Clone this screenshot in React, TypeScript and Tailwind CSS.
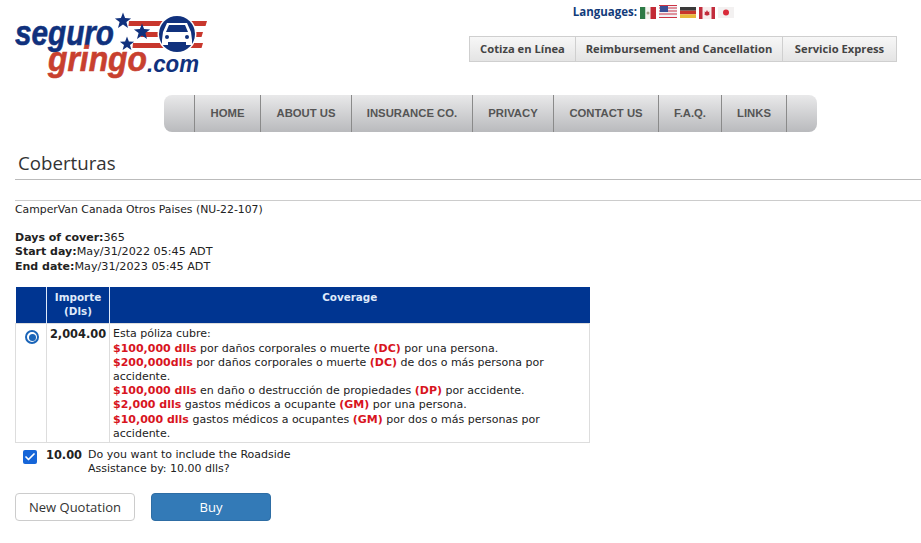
import React from 'react';
import { Check } from 'lucide-react';

const navItems = [
  { label: '', width: 'w-[30px] rounded-l-lg' },
  { label: 'HOME', width: 'w-[66px]' },
  { label: 'ABOUT US', width: 'w-[91px]' },
  { label: 'INSURANCE CO.', width: 'w-[121px]' },
  { label: 'PRIVACY', width: 'w-[81px]' },
  { label: 'CONTACT US', width: 'w-[105px]' },
  { label: 'F.A.Q.', width: 'w-[63px]' },
  { label: 'LINKS', width: 'w-[65px]' },
  { label: '', width: 'w-[31px] rounded-r-lg' },
];

const starPoints = (cx: number, cy: number, r: number) =>
  Array.from({ length: 10 }, (_, i) => {
    const radius = i % 2 === 0 ? r : r * 0.42;
    const angle = (Math.PI / 5) * i - Math.PI / 2;
    return `${(cx + radius * Math.cos(angle)).toFixed(1)},${(cy + radius * Math.sin(angle)).toFixed(1)}`;
  }).join(' ');

const Logo = () => (
  <svg width="195" height="70" viewBox="0 0 195 70" className="block">
    <path d="M114 9h78l-1.500 5h-77zM126 20h62l-1.500 5h-61zM118 31h70l-1.500 5h-69z" fill="#c8372d" />
    <circle cx="162" cy="22" r="19.500" fill="#fff" />
    <circle cx="162" cy="22" r="18" fill="#10317d" />
    <path d="M152 11h20l4 9 1 8v5h-6v-3h-18v3h-6v-5l1-8z" fill="#fff" />
    <path d="M154 13h16l3 7h-22z" fill="#10317d" />
    <circle cx="152" cy="25" r="2" fill="#10317d" />
    <circle cx="172" cy="25" r="2" fill="#10317d" />
    <polygon points={starPoints(108, 9, 8.500)} fill="#10317d" />
    <polygon points={starPoints(127, 20, 8.500)} fill="#10317d" />
    <polygon points={starPoints(112, 32, 7.500)} fill="#10317d" />
    <text x="0" y="33" textLength="99" lengthAdjust="spacingAndGlyphs" fill="#10317d" stroke="#10317d" strokeWidth="0.6" fontFamily="'Liberation Sans', sans-serif" fontSize="35" fontWeight="700" fontStyle="italic">seguro</text>
    <text x="33" y="59" textLength="99" lengthAdjust="spacingAndGlyphs" fill="#c8402f" stroke="#c8402f" strokeWidth="0.6" fontFamily="'Liberation Sans', sans-serif" fontSize="35" fontWeight="700" fontStyle="italic">gringo</text>
    <text x="132" y="60" textLength="52" lengthAdjust="spacingAndGlyphs" fill="#10317d" fontFamily="'Liberation Sans', sans-serif" fontSize="23" fontWeight="700" fontStyle="italic">.com</text>
  </svg>
);

const Flags = () => (
  <div className="flex items-center gap-[3px] ml-[3px]">
    <svg width="16" height="12" viewBox="0 0 16 12">
      <rect width="5.500" height="12" fill="#2d7a45" />
      <rect x="5.500" width="5" height="12" fill="#f4f4f0" />
      <rect x="10.500" width="5.500" height="12" fill="#c32a35" />
      <circle cx="8" cy="6" r="1.500" fill="#a9a38a" />
    </svg>
    <svg width="18" height="13" viewBox="0 0 18 13" className="-mt-[2px]">
      <rect width="18" height="13" fill="#f2f2f6" />
      <path d="M0 .5h18M0 3h18M0 6h18M0 9h18M0 12.500h18" stroke="#cc3344" strokeWidth="1.200" />
      <rect x="1" y="1" width="8" height="6" fill="#3a4f96" />
    </svg>
    <svg width="16" height="11" viewBox="0 0 16 11">
      <rect width="16" height="3.700" fill="#3a3a3a" />
      <rect y="3.700" width="16" height="3.600" fill="#c8352b" />
      <rect y="7.300" width="16" height="3.700" fill="#e8b83a" />
    </svg>
    <svg width="16" height="12" viewBox="0 0 16 12">
      <rect width="16" height="12" fill="#f7eeee" />
      <rect width="3.500" height="12" fill="#c22c3c" />
      <rect x="12.500" width="3.500" height="12" fill="#c22c3c" />
      <path d="M8 3l1 2 1.500-.5-.5 2 1 .5-2 1.500H7L5 7l1-.5-.5-2L7 5z" fill="#c22c3c" />
    </svg>
    <svg width="16" height="11" viewBox="0 0 16 11">
      <rect width="16" height="11" fill="#f3f1f1" />
      <circle cx="8" cy="5.500" r="3" fill="#d92b3a" />
    </svg>
  </div>
);

export default function App() {
  return (
    <div className="min-h-screen bg-white overflow-hidden text-[#222] [font-family:'DejaVu_Sans',sans-serif] text-[10.85px] leading-[14.2px]">
      {/* Header */}
      <header className="flex justify-between h-[95px]">
        <div className="pl-[15px] pt-[12px]">
          <Logo />
        </div>
        <div className="flex flex-col items-end pr-[24px]">
          <div className="flex items-center h-[24px] pr-[163px] pt-[1px]">
            <span className="[font-family:'Open_Sans',sans-serif] text-[11.500px] font-bold text-[#123b7a]">Languages:</span>
            <Flags />
          </div>
          <div className="flex h-[26px] mt-[12px] border border-[#cfcfcf] bg-gradient-to-b from-[#f7f7f7] to-[#e4e4e4] [font-family:'Open_Sans',sans-serif] text-[11.200px] font-bold text-[#444]">
            <div className="w-[105px] flex items-center justify-center">Cotiza en Línea</div>
            <div className="w-[208px] flex items-center justify-center border-x border-[#cfcfcf]">Reimbursement and Cancellation</div>
            <div className="w-[113px] flex items-center justify-center">Servicio Express</div>
          </div>
        </div>
      </header>

      {/* Main nav */}
      <nav className="flex ml-[164px] w-[653px] h-[37px] [font-family:'Liberation_Sans',sans-serif] text-[11.300px] font-bold text-[#555]">
        {navItems.map((item, index) => (
          <div
            key={index}
            className={`${item.width} flex items-center justify-center bg-gradient-to-b from-[#e9e9ea] to-[#b9babd] border-l border-[#8a8a8a] first:border-l-0`}
          >
            {item.label}
          </div>
        ))}
      </nav>

      {/* Content */}
      <main className="pl-[15px] pt-[18px]">
        <h1 className="pl-[3px] h-[29px] [font-family:'Open_Sans',sans-serif] text-[18.700px] leading-[25px] font-normal text-[#333] border-b border-[#bbb] box-content">
          Coberturas
        </h1>
        <div className="mt-[20px] border-t border-[#ccc] pt-[2px]">CamperVan Canada Otros Paises (NU-22-107)</div>

        <div className="mt-[14px] text-[11px]">
          <div><b>Days of cover:</b><span className="text-[11.200px]">365</span></div>
          <div><b>Start day:</b><span className="text-[11.200px]">May/31/2022 05:45 ADT</span></div>
          <div><b>End date:</b><span className="text-[11.200px]">May/31/2023 05:45 ADT</span></div>
        </div>

        <table className="mt-[13px] w-[575px] border-collapse table-fixed">
          <thead>
            <tr className="h-[37px] bg-[#003591] text-[#dfe9fa] font-bold text-[10.400px] text-center align-top">
              <th className="w-[31px]"></th>
              <th className="w-[63px] pt-[3px] border-x border-[#dfe9fa]">Importe (Dls)</th>
              <th className="pt-[3px]">Coverage</th>
            </tr>
          </thead>
          <tbody>
            <tr className="align-top text-[11px]">
              <td className="border border-[#ddd] pt-[6px]">
                <div className="ml-[9px] w-[14px] h-[14px] rounded-full border-[2px] border-[#1a64b8] flex items-center justify-center">
                  <div className="w-[7px] h-[7px] rounded-full bg-[#1a64b8]" />
                </div>
              </td>
              <td className="border border-[#ddd] pt-[3px] text-center font-bold text-[11.400px] whitespace-nowrap">2,004.00</td>
              <td className="border border-[#ddd] pl-[3px] pt-[3px] pb-[1px] pr-[20px]">
                Esta póliza cubre:<br />
                <b className="text-[#d8141e]">$100,000 dlls</b> por daños corporales o muerte <b className="text-[#d8141e]">(DC)</b> por una persona.<br />
                <b className="text-[#d8141e]">$200,000dlls</b> por daños corporales o muerte <b className="text-[#d8141e]">(DC)</b> de dos o más persona por<br />
                accidente.<br />
                <b className="text-[#d8141e]">$100,000 dlls</b> en daño o destrucción de propiedades <b className="text-[#d8141e]">(DP)</b> por accidente.<br />
                <b className="text-[#d8141e]">$2,000 dlls</b> gastos médicos a ocupante <b className="text-[#d8141e]">(GM)</b> por una persona.<br />
                <b className="text-[#d8141e]">$10,000 dlls</b> gastos médicos a ocupantes <b className="text-[#d8141e]">(GM)</b> por dos o más personas por<br />
                accidente.
              </td>
            </tr>
          </tbody>
        </table>

        {/* Roadside */}
        <div className="flex items-start mt-[5px] w-[290px] text-[11px]">
          <div className="ml-[8px] mt-[2px] w-[14px] h-[14px] rounded-[2px] bg-[#1565d8] flex items-center justify-center shrink-0">
            <Check className="w-[12px] h-[12px] text-white" strokeWidth={3.5} />
          </div>
          <b className="ml-[9px] text-[11.400px] whitespace-nowrap">10.00</b>
          <p className="ml-[6px]">Do you want to include the Roadside<br />Assistance by: 10.00 dlls?</p>
        </div>

        <div className="flex gap-[16px] mt-[17px] [font-family:'Open_Sans',sans-serif] text-[13px]">
          <button className="w-[120px] h-[28px] rounded border border-[#ccc] bg-white text-[#333]">New Quotation</button>
          <button className="w-[120px] h-[28px] rounded border border-[#2e6da4] bg-[#337ab7] text-white">Buy</button>
        </div>
      </main>
    </div>
  );
}
